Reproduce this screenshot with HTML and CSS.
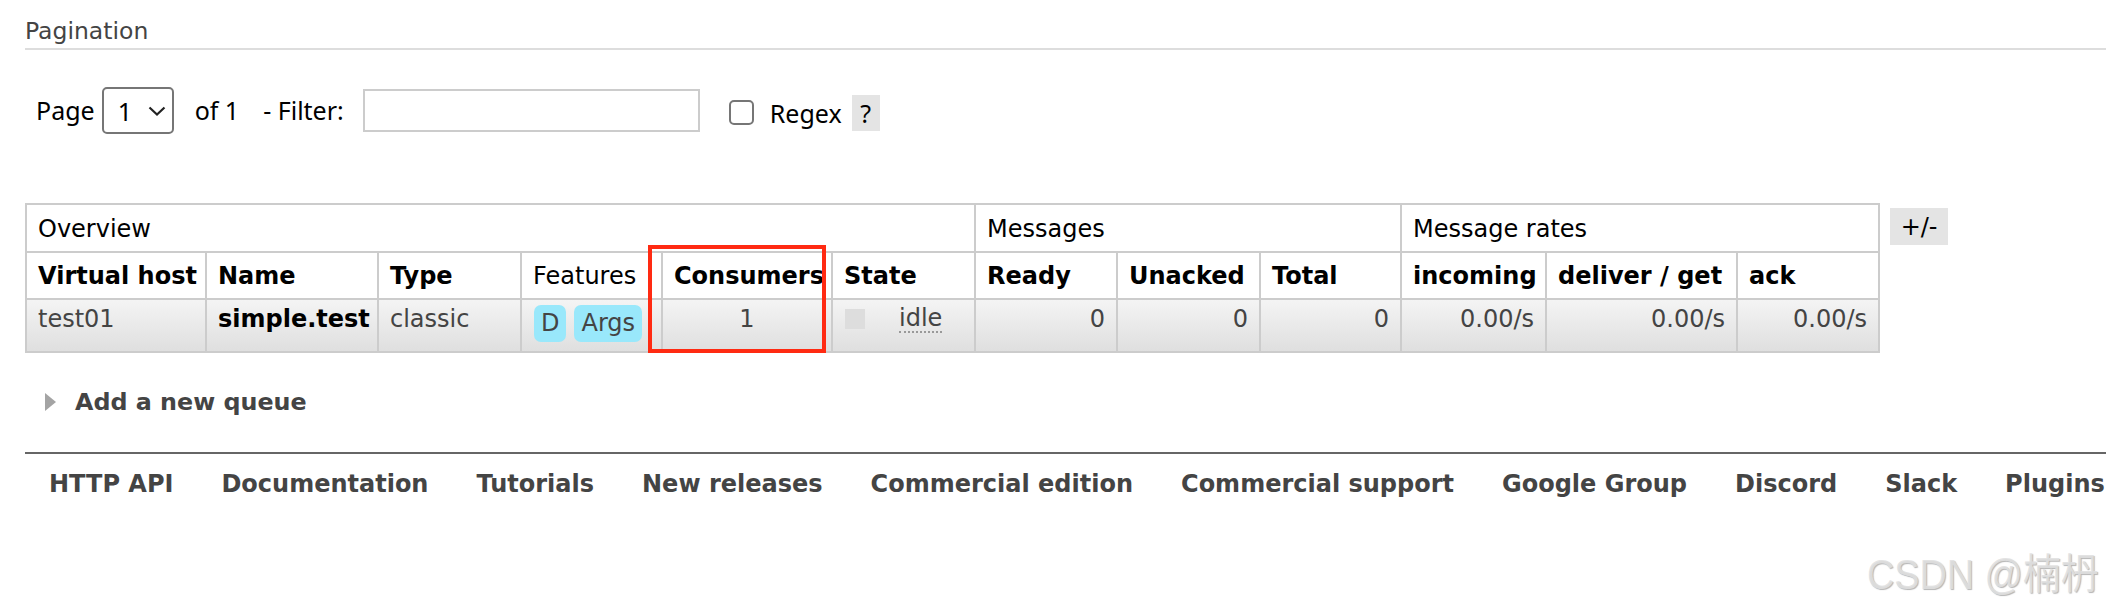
FILE: index.html
```html
<!DOCTYPE html>
<html>
<head>
<meta charset="utf-8">
<title>Queues</title>
<link rel="stylesheet" href="styles.css">
</head>
<body>
<div class="page">
  <h2 class="section-title">Pagination</h2>
  <div class="pager">
    <span class="lbl page-lbl">Page</span>
    <span class="select"><span class="sel-val">1</span><svg class="chev" viewBox="0 0 18 10"><path d="M1.5 1.5 L9 8.5 L16.5 1.5"/></svg></span>
    <span class="lbl of-lbl">of 1</span>
    <span class="lbl filter-lbl">- Filter:</span>
    <span class="input"></span>
    <span class="checkbox"></span>
    <span class="lbl regex-lbl">Regex</span>
    <span class="help">?</span>
  </div>

  <div class="table-row">
    <div class="table-wrap">
      <table class="list">
        <colgroup>
          <col class="c-vhost"><col class="c-name"><col class="c-type"><col class="c-feat"><col class="c-cons"><col class="c-state">
          <col class="c-ready"><col class="c-unacked"><col class="c-total"><col class="c-in"><col class="c-deliver"><col class="c-ack">
        </colgroup>
        <thead>
          <tr class="group">
            <th colspan="6">Overview</th>
            <th colspan="3">Messages</th>
            <th colspan="3">Message rates</th>
          </tr>
          <tr class="heads">
            <th>Virtual host</th>
            <th>Name</th>
            <th>Type</th>
            <th class="plain">Features</th>
            <th>Consumers</th>
            <th>State</th>
            <th>Ready</th>
            <th>Unacked</th>
            <th>Total</th>
            <th>incoming</th>
            <th>deliver / get</th>
            <th>ack</th>
          </tr>
        </thead>
        <tbody>
          <tr class="data">
            <td>test01</td>
            <td class="strong">simple.test</td>
            <td>classic</td>
            <td><span class="badges"><span class="badge">D</span><span class="badge">Args</span></span></td>
            <td class="center">1</td>
            <td><span class="state"><span class="sq"></span><abbr class="idle">idle</abbr></span></td>
            <td class="num">0</td>
            <td class="num">0</td>
            <td class="num">0</td>
            <td class="num">0.00/s</td>
            <td class="num">0.00/s</td>
            <td class="num">0.00/s</td>
          </tr>
        </tbody>
      </table>
      <div class="highlight"></div>
    </div>
    <span class="toggle">+/-</span>
  </div>

  <div class="add-queue"><span class="tri"></span><span>Add a new queue</span></div>

  <div class="footer">
    <a>HTTP API</a>
    <a>Documentation</a>
    <a>Tutorials</a>
    <a>New releases</a>
    <a>Commercial edition</a>
    <a>Commercial support</a>
    <a>Google Group</a>
    <a>Discord</a>
    <a>Slack</a>
    <a>Plugins</a>
  </div>
</div>
<div class="watermark">CSDN @楠枬</div>
</body>
</html>
```

FILE: styles.css
```css
html, body {
  margin: 0;
  padding: 0;
  background: #fff;
  overflow: hidden;
}

body {
  font-family: "DejaVu Sans", Verdana, sans-serif;
  font-size: 23.5px;
  color: #000;
  width: 2106px;
  height: 612px;
  position: relative;
}

.page {
  padding-left: 25px;
}

.section-title {
  margin: 0;
  padding: 17px 0 3px 0;
  font-size: 23.5px;
  line-height: 28px;
  font-weight: normal;
  color: #444;
  border-bottom: 2px solid #ddd;
}

/* pagination row */
.pager {
  display: flex;
  align-items: center;
  height: 47px;
  margin-top: 37px;
  font-family: "Noto Sans", "Open Sans", sans-serif;
  font-size: 25px;
  color: #000;
}

.lbl {
  white-space: nowrap;
}

.page-lbl { margin-left: 11px; margin-top: -2px; }

.select {
  box-sizing: border-box;
  width: 72px;
  height: 47px;
  margin-left: 7px;
  border: 2px solid #767676;
  border-radius: 5px;
  display: flex;
  align-items: center;
  padding-left: 14px;
}

.sel-val { font-size: 25px; }

.chev {
  width: 18px;
  height: 10px;
  margin-left: 16px;
  fill: none;
  stroke: #222;
  stroke-width: 2.2;
}

.of-lbl { margin-left: 21px; margin-top: -2px; }
.filter-lbl { margin-left: 24px; margin-top: -2px; }

.input {
  box-sizing: border-box;
  width: 337px;
  height: 43px;
  margin-left: 19px;
  border: 2px solid #ccc;
}

.checkbox {
  box-sizing: border-box;
  width: 25px;
  height: 25px;
  margin-left: 29px;
  margin-top: 4px;
  border: 2px solid #767676;
  border-radius: 5px;
}

.regex-lbl { margin-left: 16px; margin-top: 4px; }

.help {
  display: flex;
  align-items: center;
  justify-content: center;
  width: 28px;
  height: 36px;
  margin-left: 10px;
  margin-top: 4px;
  background: #e4e4e4;
}

/* table */
.table-row {
  display: flex;
  align-items: flex-start;
  margin-top: 69px;
}

.table-wrap {
  position: relative;
}

table.list {
  border-collapse: collapse;
  table-layout: fixed;
  width: 1853px;
  font-size: 24px;
}

.c-vhost { width: 180px; }
.c-name { width: 172px; }
.c-type { width: 143px; }
.c-feat { width: 141px; }
.c-cons { width: 170px; }
.c-state { width: 143px; }
.c-ready { width: 142px; }
.c-unacked { width: 143px; }
.c-total { width: 141px; }
.c-in { width: 145px; }
.c-deliver { width: 191px; }
.c-ack { width: 142px; }

table.list th,
table.list td {
  border: 2px solid #ccc;
  padding: 0 11px;
  line-height: 29px;
  text-align: left;
  white-space: nowrap;
  overflow: visible;
}

tr.group th {
  font-weight: normal;
  color: #000;
  padding-top: 10px;
  padding-bottom: 7px;
}

tr.heads th {
  font-weight: bold;
  color: #000;
  padding-top: 9px;
  padding-bottom: 7px;
}

tr.heads th.plain {
  font-weight: normal;
}

tr.data td {
  background: linear-gradient(#f4f4f4, #dfdfdf);
  color: #444;
  vertical-align: top;
  padding-top: 5px;
  padding-bottom: 9px;
  height: 37px;
  box-sizing: content-box;
}

tr.data td.strong {
  font-weight: bold;
  color: #000;
}

tr.data td.center { text-align: center; }
tr.data td.num { text-align: right; }

.badges {
  display: flex;
  gap: 8px;
  margin-left: 1px;
}

.badge {
  display: inline-block;
  background: #99e8fb;
  border-radius: 7px;
  padding: 0 7px;
  height: 37px;
  line-height: 37px;
  color: #444;
}

.state {
  display: flex;
  align-items: center;
}

.sq {
  display: inline-block;
  width: 20px;
  height: 20px;
  background: #ddd;
  margin-left: 1px;
}

.idle {
  margin-left: 34px;
  text-decoration: none;
  border-bottom: 2px dotted #999;
  line-height: 26px;
}

.highlight {
  position: absolute;
  left: 623px;
  top: 42px;
  width: 178px;
  height: 108px;
  box-sizing: border-box;
  border: 4px solid #ff2a12;
  pointer-events: none;
}

.toggle {
  margin-left: 10px;
  margin-top: 5px;
  width: 58px;
  height: 37px;
  display: flex;
  align-items: center;
  justify-content: center;
  background: #e4e4e4;
  font-size: 24px;
  color: #000;
}

/* add a new queue */
.add-queue {
  display: flex;
  align-items: center;
  margin-top: 34px;
  height: 29px;
  font-weight: bold;
  font-size: 23.8px;
  color: #444;
}

.tri {
  width: 0;
  height: 0;
  margin-left: 20px;
  margin-right: 19px;
  border-left: 11px solid #a4a4a4;
  border-top: 9.5px solid transparent;
  border-bottom: 9.5px solid transparent;
}

/* footer */
.footer {
  margin-top: 36px;
  border-top: 2px solid #666;
  padding-top: 16px;
  display: flex;
  white-space: nowrap;
  line-height: 29px;
  font-size: 24px;
}

.footer a {
  font-weight: bold;
  color: #444;
  padding: 0 24px;
  text-decoration: none;
}

.watermark {
  position: absolute;
  left: 1867px;
  top: 554px;
  font-family: "Liberation Sans", "Noto Sans CJK SC", sans-serif;
  font-size: 42px;
  line-height: 42px;
  white-space: nowrap;
  color: rgba(225, 225, 225, 0.9);
  text-shadow: 1px 1px 1px rgba(150, 150, 150, 0.7);
  transform: scaleX(0.9);
  transform-origin: left top;
}
```
